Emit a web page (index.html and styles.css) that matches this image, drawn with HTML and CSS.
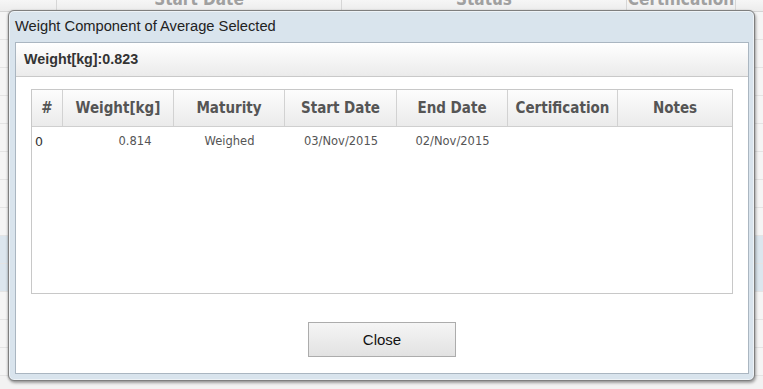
FILE: index.html
```html
<!DOCTYPE html>
<html>
<head>
<meta charset="utf-8">
<link rel="stylesheet" href="styles.css">
</head>
<body>
<div class="bg">
  <div class="bg-head">
    <div class="bg-cell c1"></div>
    <div class="bg-cell c2">Start Date</div>
    <div class="bg-cell c3">Status</div>
    <div class="bg-cell c4">Certification</div>
    <div class="bg-cell c5"></div>
  </div>
  <div class="bg-row"></div>
  <div class="bg-row"></div>
  <div class="bg-row"></div>
  <div class="bg-row"></div>
  <div class="bg-row"></div>
  <div class="bg-row"></div>
  <div class="bg-row"></div>
  <div class="bg-row"></div>
  <div class="bg-row sel"></div>
  <div class="bg-row sel"></div>
  <div class="bg-row"></div>
  <div class="bg-row"></div>
  <div class="bg-row"></div>
</div>

<div class="dialog">
  <div class="dlg-title">Weight Component of Average Selected</div>
  <div class="dlg-panel">
    <div class="summary">Weight[kg]:0.823</div>
    <div class="content">
      <div class="grid">
        <div class="grid-row grid-head">
          <div class="hc">#</div>
          <div class="hc">Weight[kg]</div>
          <div class="hc">Maturity</div>
          <div class="hc">Start Date</div>
          <div class="hc">End Date</div>
          <div class="hc">Certification</div>
          <div class="hc last">Notes</div>
        </div>
        <div class="grid-row data">
          <div class="dc idx">0</div>
          <div class="dc num">0.814</div>
          <div class="dc">Weighed</div>
          <div class="dc">03/Nov/2015</div>
          <div class="dc">02/Nov/2015</div>
          <div class="dc"></div>
          <div class="dc"></div>
        </div>
      </div>
      <div class="actions">
        <button class="btn">Close</button>
      </div>
    </div>
  </div>
</div>
</body>
</html>
```

FILE: styles.css
```css
* { box-sizing: border-box; }
html, body { margin: 0; padding: 0; }
body {
  width: 763px;
  height: 389px;
  overflow: hidden;
  position: relative;
  background: #f2f2f2;
  font-family: "Liberation Sans", Arial, sans-serif;
}

/* background page (behind modal) */
.bg { display: flex; flex-direction: column; }
.bg-head {
  display: flex;
  height: 22px;
  margin-top: -10px;
  background: linear-gradient(#ffffff, #ececec);
  border-bottom: 1px solid #d4d4d4;
}
.bg-cell {
  border-right: 1px solid #d6d6d6;
  font: bold 17px "DejaVu Sans Condensed", "DejaVu Sans", sans-serif;
  color: #a0a0a0;
  text-align: center;
  line-height: 18px;
}
.c1 { width: 57px; }
.c2 { width: 285px; }
.c3 { width: 285px; }
.c4 { width: 109px; }
.c5 { flex: 1; border-right: none; }
.bg-row {
  height: 28px;
  border-bottom: 1px solid #e4e4e4;
  background: #f5f5f5;
}
.bg-row.sel { background: #dce6ee; }

/* modal dialog */
.dialog {
  position: absolute;
  left: 8px;
  top: 10px;
  width: 747px;
  height: 371px;
  border: 1px solid #7f7f7f;
  border-radius: 6px;
  background: #d9e4ed;
  box-shadow: 1px 2px 3px rgba(0, 0, 0, 0.35), -1px 0 2px rgba(0, 0, 0, 0.15), inset 0 0 0 1px rgba(255, 255, 255, 0.55);
  padding: 0 5px 6px 6px;
  display: flex;
  flex-direction: column;
}
.dlg-title {
  height: 31px;
  line-height: 31px;
  font-size: 14.7px;
  color: #222;
}
.dlg-panel {
  flex: 1;
  background: #fff;
  border: 1px solid #aab6c1;
  display: flex;
  flex-direction: column;
}
.summary {
  height: 34px;
  line-height: 33px;
  padding-left: 8px;
  font-size: 14.3px;
  font-weight: bold;
  color: #333;
  background: linear-gradient(#ffffff, #ebebeb);
  border-bottom: 1px solid #c9c9c9;
}
.content {
  padding: 12px 15px 0 15px;
  display: flex;
  flex-direction: column;
}
.grid {
  height: 205px;
  border: 1px solid #c8c8c8;
  background: #fff;
}
.grid-row {
  display: grid;
  grid-template-columns: 31px 111px 111px 112px 111px 110px 1fr;
}
.grid-head {
  height: 37px;
  background: linear-gradient(#fdfdfd, #ebebeb);
  border-bottom: 1px solid #cfcfcf;
}
.hc {
  border-right: 1px solid #d2d2d2;
  display: flex;
  align-items: center;
  justify-content: center;
  font: bold 15px "DejaVu Sans Condensed", "DejaVu Sans", sans-serif;
  color: #555;
}
.hc.last { border-right: none; }
.data { height: 28px; }
.dc {
  display: flex;
  align-items: center;
  justify-content: center;
  font: 11.5px "DejaVu Sans", sans-serif;
  color: #555;
}
.dc.idx {
  justify-content: flex-start;
  padding-left: 3px;
  font-size: 12.5px;
  color: #333;
}
.dc.num { padding-left: 33px; }

.actions {
  display: flex;
  justify-content: center;
  margin-top: 28px;
}
.btn {
  width: 148px;
  height: 35px;
  border: 1px solid #acacac;
  border-radius: 0;
  background: linear-gradient(#f5f5f5, #e2e2e2);
  font-family: "Liberation Sans", Arial, sans-serif;
  font-size: 15px;
  color: #111;
  padding: 0;
}
```
